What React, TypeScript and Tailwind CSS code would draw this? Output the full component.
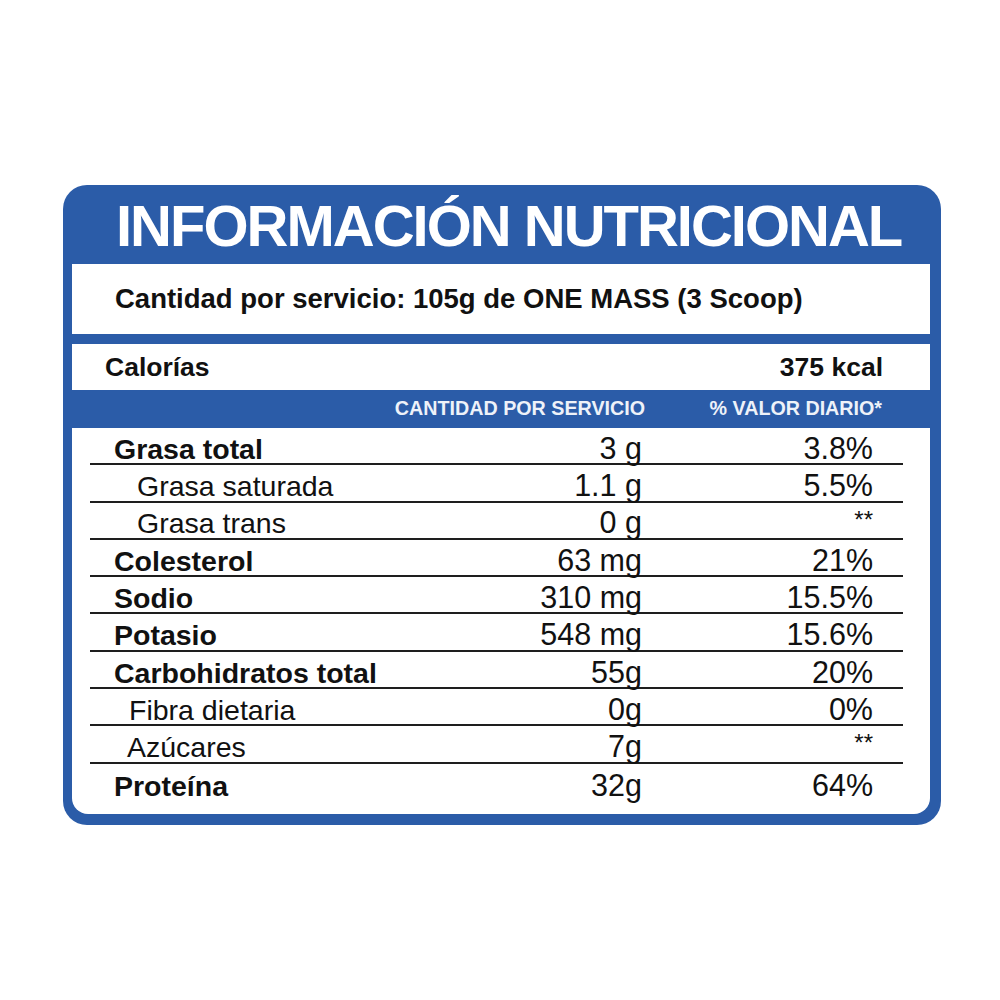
const rows = [
  { label: "Grasa total", bold: true, indent: "pl-[24px]", value: "3 g", pct: "3.8%" },
  { label: "Grasa saturada", bold: false, indent: "pl-[47px]", value: "1.1 g", pct: "5.5%" },
  { label: "Grasa trans", bold: false, indent: "pl-[47px]", value: "0 g", pct: "**" },
  { label: "Colesterol", bold: true, indent: "pl-[24px]", value: "63 mg", pct: "21%" },
  { label: "Sodio", bold: true, indent: "pl-[24px]", value: "310 mg", pct: "15.5%" },
  { label: "Potasio", bold: true, indent: "pl-[24px]", value: "548 mg", pct: "15.6%" },
  { label: "Carbohidratos total", bold: true, indent: "pl-[24px]", value: "55g", pct: "20%" },
  { label: "Fibra dietaria", bold: false, indent: "pl-[39px]", value: "0g", pct: "0%" },
  { label: "Azúcares", bold: false, indent: "pl-[37px]", value: "7g", pct: "**" },
  { label: "Proteína", bold: true, indent: "pl-[24px]", value: "32g", pct: "64%" },
];

export default function App() {
  return (
    <div className="min-h-[1000px] w-[1000px] bg-white pt-[185px] font-['Liberation_Sans',Arial,sans-serif] text-[#111]">
      <div className="ml-[63px] w-[878px] rounded-[24px] bg-[#2b5ca8] pb-[11px] pl-[9px] pr-[11px]">
        {/* title */}
        <div className="flex h-[79px] items-end pb-[9px] pl-[44px]">
          <h1 className="text-[58px] font-bold leading-none tracking-[-2px] text-white">
            INFORMACIÓN NUTRICIONAL
          </h1>
        </div>

        {/* serving */}
        <div className="flex h-[70px] items-center bg-white pl-[43px]">
          <span className="text-[27.5px] font-bold leading-none">
            Cantidad por servicio: 105g de ONE MASS (3 Scoop)
          </span>
        </div>

        {/* calories */}
        <div className="mt-[10px] flex h-[46px] items-center justify-between bg-white pl-[33px] pr-[47px]">
          <span className="text-[26.5px] font-bold leading-none">Calorías</span>
          <span className="text-[26.5px] font-bold leading-none">375 kcal</span>
        </div>

        {/* column headers */}
        <div className="flex h-[38px] items-center pl-[18px] pr-[27px] text-[19.7px] font-bold leading-none text-[#eef2f9]">
          <div className="w-[555px] text-right">CANTIDAD POR SERVICIO</div>
          <div className="w-[237px] text-right">% VALOR DIARIO*</div>
        </div>

        {/* nutrients */}
        <div className="rounded-b-[16px] bg-white pb-[13px] pl-[18px] pr-[27px]">
          {rows.map((r, i) => (
            <div
              key={r.label}
              className={
                "grid h-[37.3px] grid-cols-[432px_120px_231px_30px] items-end leading-none " +
                (i < rows.length - 1 ? "border-b-2 border-[#1e1e1e]" : "")
              }
            >
              <span className={r.indent + " " + (r.bold ? "text-[28.5px] font-bold" : "text-[28.5px]")}>
                {r.label}
              </span>
              <span className="text-right text-[30.5px]">{r.value}</span>
              <span className={"text-right " + (r.pct === "**" ? "self-start pt-[5px] text-[24px]" : "text-[30.5px]")}>
                {r.pct}
              </span>
              <span />
            </div>
          ))}
        </div>
      </div>
    </div>
  );
}
